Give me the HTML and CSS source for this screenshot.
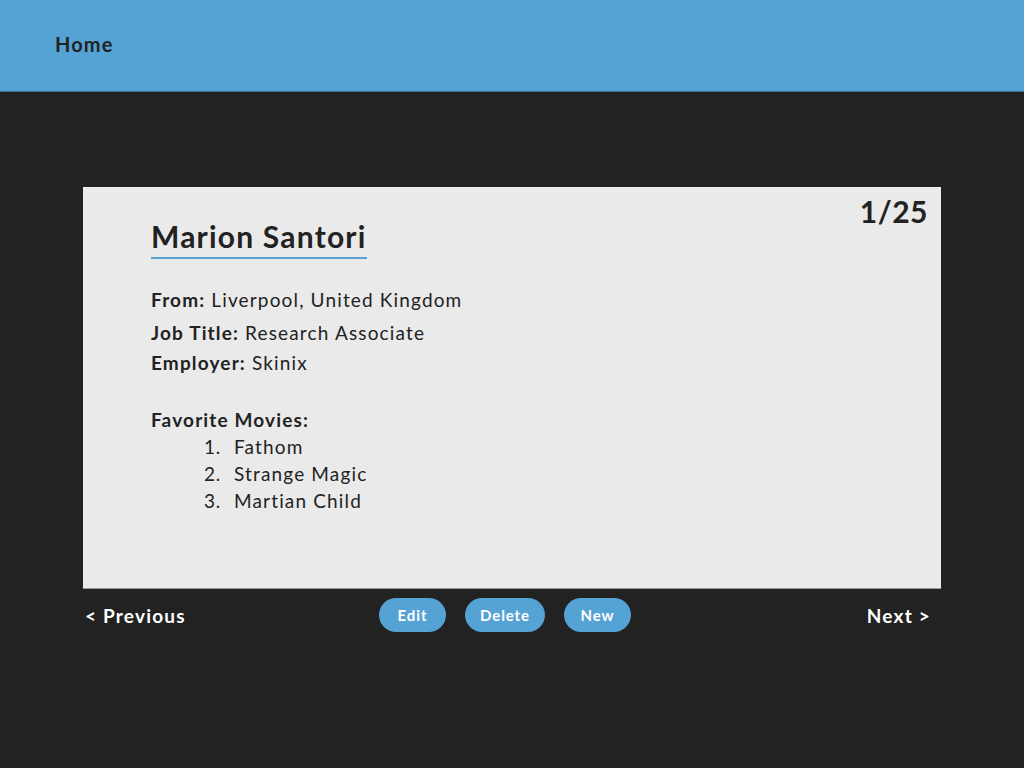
FILE: index.html
```html
<!DOCTYPE html>
<html lang="en">
<head>
<meta charset="utf-8">
<title>Profiles</title>
<link rel="stylesheet" href="styles.css">
</head>
<body>
<header class="topbar">
  <a class="home-link" href="#">Home</a>
</header>
<main class="page">
  <section class="card">
    <div class="profile">
      <h1 class="name">Marion Santori</h1>
      <p class="field field-from"><b>From:</b> Liverpool, United Kingdom</p>
      <p class="field field-job"><b>Job Title:</b> Research Associate</p>
      <p class="field field-emp"><b>Employer:</b> Skinix</p>
      <p class="field movies-title"><b>Favorite Movies:</b></p>
      <ol class="movies">
        <li>Fathom</li>
        <li>Strange Magic</li>
        <li>Martian Child</li>
      </ol>
    </div>
    <div class="counter">1/25</div>
  </section>
  <nav class="controls">
    <a class="pager pager-prev" href="#">&lt; Previous</a>
    <div class="actions">
      <button class="btn">Edit</button>
      <button class="btn">Delete</button>
      <button class="btn">New</button>
    </div>
    <a class="pager pager-next" href="#">Next &gt;</a>
  </nav>
</main>
</body>
</html>
```
FILE: styles.css
```css
* { box-sizing: border-box; }
body {
  margin: 0;
  background: #222222;
  font-family: Lato, "Noto Sans", sans-serif;
  color: #222222;
}
.topbar {
  height: 92px;
  background: #55a2d5;
  border-bottom: 1px solid #3f7397;
  display: flex;
  align-items: center;
  padding: 0 0 4px 55px;
}
.home-link {
  color: #222222;
  text-decoration: none;
  font-weight: 700;
  font-size: 20px;
  letter-spacing: 1.1px;
}
.page {
  padding: 95px 83px 0;
}
.card {
  background: #eaeaea;
  height: 402px;
  display: flex;
  justify-content: space-between;
  align-items: flex-start;
  border-bottom: 1px solid #9a9a9a;
}
.profile {
  padding: 30px 0 0 68px;
}
.name {
  display: inline-block;
  margin: 0 0 26px;
  font-size: 30px;
  font-weight: 700;
  line-height: 38px;
  letter-spacing: 1.2px;
  border-bottom: 2px solid #55a2d5;
  padding-bottom: 2px;
}
.field {
  margin: 0;
  font-size: 19px;
  line-height: 30px;
  letter-spacing: 1.15px;
}
.field-from { margin-bottom: 3px; }
.field b { font-weight: 700; }
.movies-title { margin-top: 27px; }
.movies {
  margin: -2px 0 0;
  padding-left: 53px;
  list-style: none;
  font-size: 19px;
  line-height: 27px;
  letter-spacing: 1.15px;
}
.movies li::before {
  content: counter(list-item) ".";
  display: inline-block;
  width: 30px;
  letter-spacing: 0.6px;
}
.counter {
  font-size: 30px;
  font-weight: 700;
  letter-spacing: 0.5px;
  padding: 8px 13px 0 0;
  line-height: 32px;
}
.controls {
  display: grid;
  grid-template-columns: 1fr auto 1fr;
  align-items: center;
  padding: 9px 12px 0 2px;
}
.pager {
  color: #ffffff;
  text-decoration: none;
  font-weight: 700;
  font-size: 19px;
  letter-spacing: 1.2px;
}
.pager-next {
  justify-self: end;
  margin-right: -2px;
}
.actions {
  display: flex;
  gap: 19px;
  margin-right: 4px;
}
.btn {
  background: #55a2d5;
  color: #ffffff;
  border: none;
  border-radius: 17px;
  height: 34px;
  min-width: 67px;
  padding: 0 15px;
  font-family: inherit;
  font-weight: 700;
  font-size: 15px;
  letter-spacing: 0.9px;
}
```
